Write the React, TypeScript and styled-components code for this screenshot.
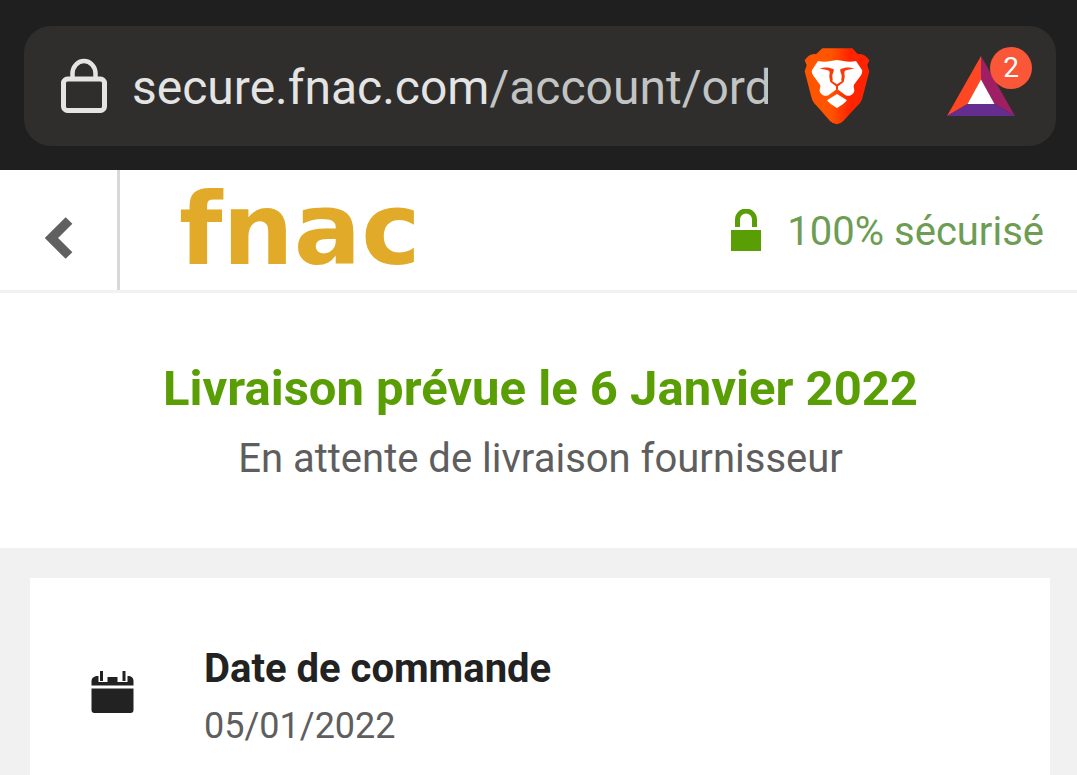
import React from "react";
import styled, { createGlobalStyle } from "styled-components";

const GlobalStyle = createGlobalStyle`
  * { box-sizing: border-box; }
  html, body, #root { height: 100%; }
  body {
    margin: 0;
    background: #f1f1f1;
    font-family: Roboto, "Liberation Sans", sans-serif;
    color: #222;
  }
  button { border: 0; padding: 0; background: none; font: inherit; color: inherit; cursor: pointer; }
  svg { display: block; flex: none; }
`;

const Page = styled.div`
  min-height: 100%;
  display: flex;
  flex-direction: column;
`;

const BrowserBar = styled.div`
  background: #1f1f1f;
  padding: 26px 21px 24px 24px;
`;

const AddressBar = styled.div`
  display: flex;
  align-items: center;
  height: 120px;
  padding: 0 24px 0 37px;
  border-radius: 27px;
  background: #2f2e2c;
`;

const Url = styled.div`
  flex: 1;
  min-width: 0;
  margin: 4px 36px 0 25px;
  overflow: hidden;
  white-space: nowrap;
  font-size: 48px;
  line-height: 60px;
  color: #e4e4e4;
`;

const UrlPath = styled.span`
  color: #c2c4c4;
`;

const RewardsButton = styled.button`
  position: relative;
  display: flex;
  align-items: flex-end;
  width: 85px;
  height: 78px;
  padding-bottom: 8px;
  margin-left: 77px;
`;

const Badge = styled.span`
  position: absolute;
  top: 0;
  right: 0;
  width: 42px;
  border-radius: 50%;
  background: #fa5738;
  color: #fff;
  font-size: 28px;
  line-height: 42px;
  text-align: center;
`;

const Header = styled.header`
  display: flex;
  height: 123px;
  padding-right: 33px;
  background: #fff;
  border-bottom: 3px solid #f1f1f1;
`;

const BackButton = styled.button`
  display: flex;
  align-items: center;
  justify-content: center;
  width: 120px;
  padding-top: 16px;
  border-right: 3px solid #d8d8d8;
`;

const Logo = styled.a`
  display: flex;
  align-items: center;
  margin-left: 59px;
  color: #e1aa29;
  font-family: "DejaVu Sans", sans-serif;
  font-size: 100px;
  font-weight: 700;
  line-height: 124px;
  text-decoration: none;
`;

const Secure = styled.div`
  display: flex;
  align-items: center;
  gap: 26px;
  margin-left: auto;
  color: #6d9d52;
  font-size: 40px;
  line-height: 48px;
`;

const SecureLabel = styled.span`
  padding-top: 3px;
`;

const Status = styled.section`
  padding: 66px 24px 63px 28px;
  background: #fff;
  text-align: center;
`;

const StatusTitle = styled.h1`
  margin: 0;
  color: #5a9e05;
  font-size: 49px;
  font-weight: 700;
  line-height: 60px;
`;

const StatusText = styled.p`
  margin: 14px 0 0;
  color: #5e5e5e;
  font-size: 40px;
  line-height: 52px;
`;

const Content = styled.main`
  flex: 1;
  display: flex;
  padding: 30px 27px 0 30px;
`;

const Card = styled.section`
  flex: 1;
  padding: 66px 60px 24px;
  background: #fff;
`;

const InfoRow = styled.div`
  display: flex;
  align-items: flex-start;
  gap: 70px;

  > svg { margin-top: 26px; }
`;

const InfoTitle = styled.h2`
  margin: 0;
  font-size: 40px;
  font-weight: 700;
  line-height: 50px;
`;

const InfoValue = styled.p`
  margin: 8px 0 0;
  color: #5e5e5e;
  font-size: 36px;
  line-height: 48px;
`;

const PadlockIcon = () => (
  <svg width="46" height="56" viewBox="0 0 46 56" fill="none" stroke="#e4e4e4" strokeWidth="5" aria-hidden="true">
    <rect x="2.5" y="21" width="41" height="31.5" rx="4" />
    <path d="M11.5 21v-5.500a11.500 12.500 0 0 1 23 0V21" strokeWidth="4.500" />
  </svg>
);

const BraveIcon = () => (
  <svg width="66" height="77" viewBox="42 38 198 231" aria-hidden="true">
    <defs>
      <linearGradient id="brave" x1="0" x2="1" y1="0" y2="0">
        <stop offset="0.4" stopColor="#ff5500" />
        <stop offset="0.7" stopColor="#ff2300" />
      </linearGradient>
    </defs>
    <path
      fill="url(#brave)"
      d="M97 39h90l17 18c12-3 23 3 34 18l-6 15 6 18-20 77c-3 12-8 20-16 26l-42 46q-19 20-40 0l-40-46c-8-6-13-14-16-26L44 108l6-18-6-15c11-15 22-21 34-18z"
    />
    <path
      fill="#fff"
      d="M84 77c20 5 39 0 57-3 18 3 37 8 57 3l18 27c2 6-1 13-4 17l-19 26c-6 8 4 16-2 25-5 8-15 12-24 8l-26-19-26 19c-9 4-19 0-24-8-6-9 4-17-2-25l-19-26c-3-4-6-11-4-17zM112 194l29-18 29 18c1 3-4 8-29 24-25-16-30-21-29-24z"
    />
    <path
      fill="#fc3908"
      d="M88 100c18-6 30-4 42 1 4 3-2 14-3 19-1 8 3 11 0 18l14 9 14-9c-3-7 1-10 0-18-1-5-7-16-3-19 12-5 24-7 42-1-11 1-21 2-29 6-3 4-2 9-1 14s-2 13-3 20l-17 13v10h-6v-10l-17-13c-1-7-4-15-3-20s2-10-1-14c-8-4-18-5-29-6z"
    />
  </svg>
);

const RewardsIcon = () => (
  <svg width="69" height="62" viewBox="0 0 69 62" aria-hidden="true">
    <path fill="#ff4724" d="M34 1v24L20.500 49 0 61z" />
    <path fill="#9e1f63" d="M34 1v24l13.500 24L68 61z" />
    <path fill="#662d91" d="M0 61l20.500-12h27L68 61z" />
    <path fill="#fff" d="M34 24.500L20.500 49h27z" />
  </svg>
);

const ChevronIcon = () => (
  <svg width="28" height="42" viewBox="0 0 28 42" fill="none" stroke="#606060" strokeWidth="9.500" aria-hidden="true">
    <path d="M24 3.500L6.500 21 24 38.500" />
  </svg>
);

const OpenLockIcon = () => (
  <svg width="30" height="42" viewBox="0 0 30 42" aria-hidden="true">
    <path d="M0 21h30v21H0z" fill="#5a9e05" />
    <path d="M6.500 18v-7.500a8.500 8.500 0 0 1 17 0V18" fill="none" stroke="#5a9e05" strokeWidth="5" />
  </svg>
);

const CalendarIcon = () => (
  <svg width="44" height="44" viewBox="0 0 44 44" fill="#222" aria-hidden="true">
    <path d="M1.500 15.500V11q0-4 5-5h2v6h9V7h10v5h10V6h2q4 1 4 5v4.500z" />
    <path d="M10 1h3v10h-3zM32.500 1h3v10h-3zM1.500 18.500h42V40q0 3-3 3h-36q-3 0-3-3z" />
  </svg>
);

export default function App() {
  return (
    <>
      <GlobalStyle />
      <Page>
        <BrowserBar>
          <AddressBar>
            <PadlockIcon />
            <Url>
              secure.fnac.com<UrlPath>/account/ord</UrlPath>
            </Url>
            <button type="button" aria-label="Brave Shields">
              <BraveIcon />
            </button>
            <RewardsButton type="button" aria-label="Brave Rewards">
              <RewardsIcon />
              <Badge>2</Badge>
            </RewardsButton>
          </AddressBar>
        </BrowserBar>
        <Header>
          <BackButton type="button" aria-label="Retour">
            <ChevronIcon />
          </BackButton>
          <Logo href="#">fnac</Logo>
          <Secure>
            <OpenLockIcon />
            <SecureLabel>100% sécurisé</SecureLabel>
          </Secure>
        </Header>
        <Status>
          <StatusTitle>Livraison prévue le 6 Janvier 2022</StatusTitle>
          <StatusText>En attente de livraison fournisseur</StatusText>
        </Status>
        <Content>
          <Card>
            <InfoRow>
              <CalendarIcon />
              <div>
                <InfoTitle>Date de commande</InfoTitle>
                <InfoValue>05/01/2022</InfoValue>
              </div>
            </InfoRow>
          </Card>
        </Content>
      </Page>
    </>
  );
}
